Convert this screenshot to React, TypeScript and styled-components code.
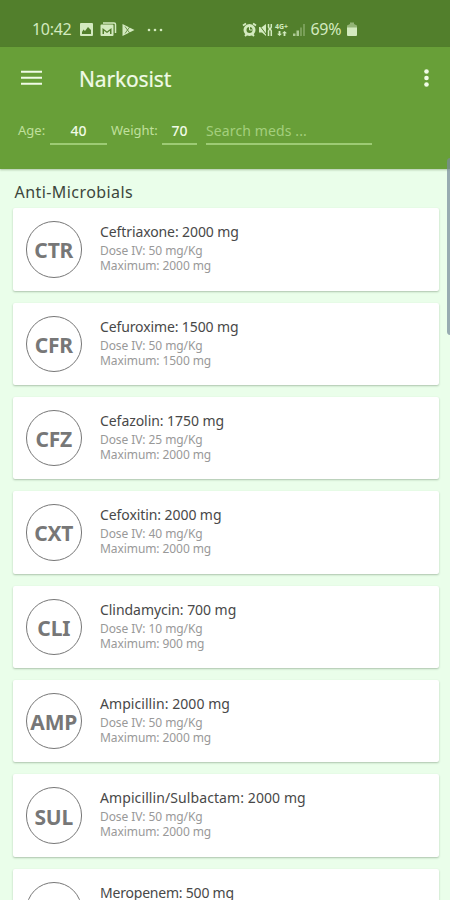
import React from 'react';
import styled, { createGlobalStyle } from 'styled-components';

const GlobalStyle = createGlobalStyle`
  * { box-sizing: border-box; }
  html, body { margin: 0; padding: 0; height: 900px; overflow: hidden; }
  body { background: #eafeea; font-family: "Noto Sans", "Open Sans", sans-serif; }
`;

const Screen = styled.div`
  position: relative;
  width: 450px;
  height: 900px;
  overflow: hidden;
  background: #eafeea;
`;

const StatusBar = styled.div`
  height: 47px;
  padding: 12px 92.5px 0 32px;
  display: flex;
  justify-content: space-between;
  align-items: flex-start;
  background: #527f2c;
  color: #d3eabf;
`;

const StatusGroup = styled.div<{ $gap: number }>`
  display: flex;
  align-items: center;
  height: 35px;
  gap: ${(p) => p.$gap}px;
  svg { display: block; flex: none; }
`;

const StatusText = styled.span<{ $width: number }>`
  width: ${(p) => p.$width}px;
  font-size: 16px;
  line-height: 35px;
  letter-spacing: -0.3px;
  white-space: nowrap;
`;

const Header = styled.header`
  height: 122px;
  background: #689f38;
  color: #f0fbe6;
  box-shadow: 0 1px 2px rgba(60, 90, 40, 0.35);
`;

const TitleRow = styled.div`
  height: 62px;
  padding: 0 19px 0 20px;
  display: flex;
  align-items: center;
`;

const AppTitle = styled.h1`
  flex: 1;
  margin: 2px 0 0 37px;
  font-size: 21px;
  font-weight: 400;
  line-height: 30px;
  letter-spacing: -0.15px;
  -webkit-text-stroke: 0.2px currentColor;
`;

const FilterRow = styled.div`
  display: flex;
  align-items: flex-start;
  padding: 9px 0 0 18px;
  height: 38px;
  font-size: 13px;
  line-height: 25px;
`;

const FilterLabel = styled.span<{ $width: number }>`
  width: ${(p) => p.$width}px;
  color: #c0e09d;
  white-space: nowrap;
`;

const Field = styled.div<{ $width: number; $gap: number; $muted?: boolean }>`
  width: ${(p) => p.$width}px;
  height: 27px;
  margin-right: ${(p) => p.$gap}px;
  border-bottom: 2px solid #9dcb74;
  text-align: ${(p) => (p.$muted ? 'left' : 'center')};
  color: ${(p) => (p.$muted ? '#a4cf7d' : '#f0fbe6')};
  font-size: 14px;
  font-weight: ${(p) => (p.$muted ? 400 : 500)};
  letter-spacing: ${(p) => (p.$muted ? 0.12 : 0)}px;
  line-height: 25px;
  white-space: nowrap;
`;

const SectionTitle = styled.h2`
  margin: 0;
  padding: 11px 0 0 14.5px;
  height: 39.2px;
  font-size: 16px;
  font-weight: 400;
  line-height: 24px;
  letter-spacing: 0.43px;
  color: #3c463c;
`;

const MedList = styled.ul`
  list-style: none;
  margin: 0;
  padding: 0 11px 0 12.5px;
  display: flex;
  flex-direction: column;
  gap: 11.85px;
`;

const Card = styled.li`
  height: 82.5px;
  flex: none;
  display: flex;
  padding: 13px 0 0 13px;
  background: #fff;
  border-radius: 2px;
  box-shadow: 0 1px 2px rgba(40, 70, 40, 0.32);
`;

const Badge = styled.div`
  width: 56.5px;
  height: 56.5px;
  padding-top: 2px;
  flex: none;
  display: flex;
  align-items: center;
  justify-content: center;
  border: 1px solid #777;
  border-radius: 50%;
  color: #777;
  font-size: 21px;
  font-weight: 700;
  line-height: 30px;
  letter-spacing: -0.2px;
`;

const Details = styled.div`
  margin: 1px 0 0 18px;
  white-space: nowrap;
`;

const MedName = styled.div<{ $spacing: number }>`
  height: 21px;
  font-size: 14px;
  line-height: 20px;
  letter-spacing: ${(p) => p.$spacing}px;
  color: #484848;
`;

const DoseLine = styled.div`
  height: 15px;
  font-size: 12px;
  line-height: 15px;
  letter-spacing: -0.08px;
  color: #999;
`;

const ScrollThumb = styled.div`
  position: absolute;
  right: -4px;
  top: 158px;
  width: 7.5px;
  height: 177px;
  border-radius: 4px;
  background: rgba(120, 140, 155, 0.72);
`;

interface Med {
  code: string;
  name: string;
  dose: string;
  max: string;
  spacing: number;
}

const meds: Med[] = [
  { code: 'CTR', name: 'Ceftriaxone: 2000 mg', dose: '50', max: '2000', spacing: -0.1 },
  { code: 'CFR', name: 'Cefuroxime: 1500 mg', dose: '50', max: '1500', spacing: -0.12 },
  { code: 'CFZ', name: 'Cefazolin: 1750 mg', dose: '25', max: '2000', spacing: -0.06 },
  { code: 'CXT', name: 'Cefoxitin: 2000 mg', dose: '40', max: '2000', spacing: -0.08 },
  { code: 'CLI', name: 'Clindamycin: 700 mg', dose: '10', max: '900', spacing: -0.05 },
  { code: 'AMP', name: 'Ampicillin: 2000 mg', dose: '50', max: '2000', spacing: 0.06 },
  { code: 'SUL', name: 'Ampicillin/Sulbactam: 2000 mg', dose: '50', max: '2000', spacing: 0.09 },
  { code: 'MER', name: 'Meropenem: 500 mg', dose: '10', max: '500', spacing: -0.21 },
];

const NotificationIcons = () => (
  <svg width="86" height="16" viewBox="0 0 86 16" fill="currentColor">
    <path fillRule="evenodd" d="M2 1h11q1 0 1 1v11q0 1-1 1H2q-1 0-1-1V2q0-1 1-1zM3 12h9V8L9 5 6 9 4.500 7.500 3 10z" />
    <path d="M24 1h11q1.500 0 1.500 1.500V11" fill="none" stroke="currentColor" strokeWidth="1.500" />
    <path fillRule="evenodd" d="M22.500 2.500H33.500q1 0 1 1v9.500q0 1-1 1H22.500q-1 0-1-1V3.500q0-1 1-1zM23.500 12V6l4.500 3.500L32.500 6v6h-1.500V8.800l-3 2.200L25 8.800V12z" />
    <path d="M43.500 2l12 6-12 6z" />
    <path d="M46 4.500l5 7M46 11.500l5-7" stroke="#527f2c" strokeWidth=".8" />
    <circle cx="70" cy="8" r="1.300" /><circle cx="76" cy="8" r="1.300" /><circle cx="82" cy="8" r="1.300" />
  </svg>
);

const SystemIcons = () => (
  <svg width="65" height="16" viewBox="0 0 65 16" fill="currentColor">
    <path d="M1 3.500l3-2M11 1.500l3 2M3 14l2-2M12 14l-2-2" stroke="currentColor" strokeWidth="1.900" />
    <path fillRule="evenodd" d="M7.500 2a6 6 0 1 1 0 12 6 6 0 0 1 0-12zm0 3a3 3 0 1 0 0 6 3 3 0 0 0 0-6z" />
    <path d="M7.500 5v3h2.500" fill="none" stroke="currentColor" />
    <path d="M17 5h3l4-3v12l-4-3.500h-3z" />
    <path d="M16.500 2l9 12" stroke="#527f2c" strokeWidth="1" />
    <path d="M26.500 2v3l1 2-1 2v5M29.300 2v3l-1 2 1 2v5" fill="none" stroke="currentColor" strokeWidth="1.500" />
    <text x="33" y="7" fontSize="7" fontWeight="700" textLength="13" lengthAdjust="spacingAndGlyphs">4G+</text>
    <path d="M37.500 14l-2.500-2.200h1.600V9h1.800v2.800H40zM42.500 9l2.500 2.200h-1.600V14h-1.800v-2.800H40z" />
    <path d="M51 11.500h2.500V14H51zM54.500 8.500H57V14h-2.500z" opacity=".7" />
    <path d="M58 5.500h2V14h-2zM61 2h2v12h-2z" opacity=".3" />
  </svg>
);

const BatteryIcon = () => (
  <svg width="12" height="16" viewBox="0 0 12 16" fill="currentColor">
    <path d="M4 .5h4v1.500l3 1.500v3H1V3.500l3-1.500z" opacity=".5" />
    <path d="M1 5.500h10v7.500q0 1-1 1H2q-1 0-1-1z" />
  </svg>
);

const MenuIcon = () => (
  <svg width="22" height="16" viewBox="0 0 22 16" fill="currentColor">
    <path d="M1 .8h21v2H1zM1 6.800h21v2H1zM1 12.800h21v2H1z" />
  </svg>
);

const MoreIcon = () => (
  <svg width="10" height="20" viewBox="0 0 10 20" fill="currentColor">
    <circle cx="5.500" cy="3.500" r="2.300" /><circle cx="5.500" cy="10" r="2.300" /><circle cx="5.500" cy="16.500" r="2.300" />
  </svg>
);

export default function App() {
  return (
    <Screen>
      <GlobalStyle />
      <StatusBar>
        <StatusGroup $gap={7}>
          <StatusText $width={40}>10:42</StatusText>
          <NotificationIcons />
        </StatusGroup>
        <StatusGroup $gap={4}>
          <SystemIcons />
          <StatusText $width={31}>69%</StatusText>
          <BatteryIcon />
        </StatusGroup>
      </StatusBar>
      <Header>
        <TitleRow>
          <MenuIcon />
          <AppTitle>Narkosist</AppTitle>
          <MoreIcon />
        </TitleRow>
        <FilterRow>
          <FilterLabel $width={32}>Age:</FilterLabel>
          <Field $width={57} $gap={4}>40</Field>
          <FilterLabel $width={51}>Weight:</FilterLabel>
          <Field $width={35} $gap={9}>70</Field>
          <Field $width={166} $gap={0} $muted>Search meds ...</Field>
        </FilterRow>
      </Header>
      <SectionTitle>Anti-Microbials</SectionTitle>
      <MedList>
        {meds.map((m) => (
          <Card key={m.code}>
            <Badge>{m.code}</Badge>
            <Details>
              <MedName $spacing={m.spacing}>{m.name}</MedName>
              <DoseLine>{`Dose IV: ${m.dose} mg/Kg`}</DoseLine>
              <DoseLine>{`Maximum: ${m.max} mg`}</DoseLine>
            </Details>
          </Card>
        ))}
      </MedList>
      <ScrollThumb />
    </Screen>
  );
}
